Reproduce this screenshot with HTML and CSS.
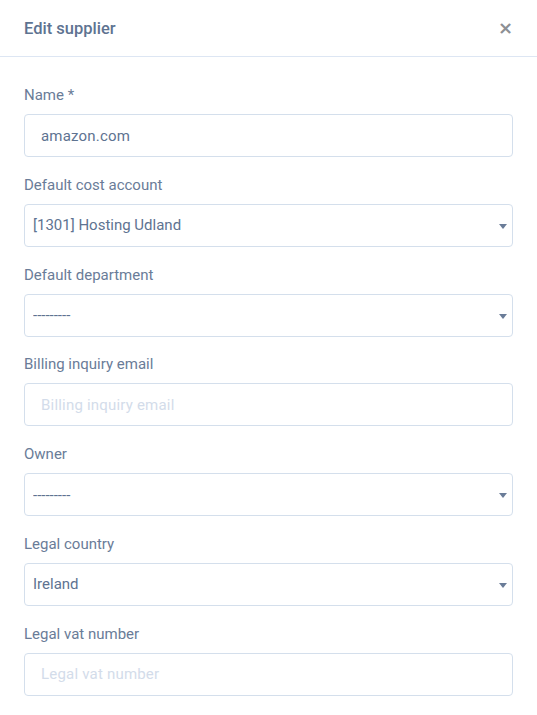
FILE: index.html
```html
<!DOCTYPE html>
<html lang="en">
<head>
    <meta charset="UTF-8">
    <meta name="viewport" content="width=device-width, initial-scale=1.0">
    <title>Edit supplier</title>
    <link rel="stylesheet" href="styles.css">
</head>
<body>
    <div class="modal">
        <div class="modal-header">
            <h2>Edit supplier</h2>
            <button class="close" type="button">&times;</button>
        </div>

        <div class="modal-body">
            <div class="form-group">
                <label for="name">Name *</label>
                <input type="text" id="name" value="amazon.com">
            </div>

            <div class="form-group">
                <label for="account">Default cost account</label>
                <div class="select">
                    <select id="account">
                        <option>[1301] Hosting Udland</option>
                    </select>
                </div>
            </div>

            <div class="form-group">
                <label for="department">Default department</label>
                <div class="select">
                    <select id="department">
                        <option>---------</option>
                    </select>
                </div>
            </div>

            <div class="form-group">
                <label for="email">Billing inquiry email</label>
                <input type="email" id="email" placeholder="Billing inquiry email">
            </div>

            <div class="form-group">
                <label for="owner">Owner</label>
                <div class="select">
                    <select id="owner">
                        <option>---------</option>
                    </select>
                </div>
            </div>

            <div class="form-group">
                <label for="country">Legal country</label>
                <div class="select">
                    <select id="country">
                        <option>Ireland</option>
                    </select>
                </div>
            </div>

            <div class="form-group">
                <label for="vat">Legal vat number</label>
                <input type="text" id="vat" placeholder="Legal vat number">
            </div>
        </div>
    </div>
</body>
</html>
```

FILE: styles.css
```css
body {
    font-family: Roboto, "Liberation Sans", sans-serif;
    background-color: #ffffff;
    margin: 0;
    color: #6a7c98;
}
.modal {
    width: 537px;
    background-color: white;
}
.modal-header {
    display: flex;
    align-items: center;
    justify-content: space-between;
    height: 56px;
    padding: 0 24px;
    border-bottom: 1px solid #dde6f3;
}
.modal-header h2 {
    margin: 0;
    font-size: 16.5px;
    font-weight: 500;
    color: #5e7391;
}
.close {
    background: none;
    border: none;
    padding: 0;
    margin-right: 0;
    font-family: "DejaVu Sans", sans-serif;
    font-size: 18px;
    font-weight: bold;
    line-height: 1;
    color: #8c8f94;
    cursor: pointer;
}
.modal-body {
    padding: 28px 24px 0 24px;
}
.form-group {
    margin-bottom: 17.8px;
}
label {
    display: block;
    font-size: 15px;
    line-height: 20px;
    margin-bottom: 9px;
    color: #6a7c98;
}
input, select {
    box-sizing: border-box;
    width: 100%;
    height: 43px;
    border: 1px solid #d4dfec;
    border-radius: 4px;
    font-family: Roboto, "Liberation Sans", sans-serif;
    font-size: 15px;
    color: #5e7391;
    background-color: white;
    outline: none;
}
input {
    padding: 0 16px;
    letter-spacing: 0.2px;
}
input::placeholder {
    color: #d3dcea;
}
.select {
    position: relative;
}
select {
    appearance: none;
    padding: 0 30px 0 8px;
}
.select::after {
    content: "";
    position: absolute;
    right: 6px;
    top: 20px;
    border-left: 4px solid transparent;
    border-right: 4px solid transparent;
    border-top: 5px solid #6a7c98;
}
```
